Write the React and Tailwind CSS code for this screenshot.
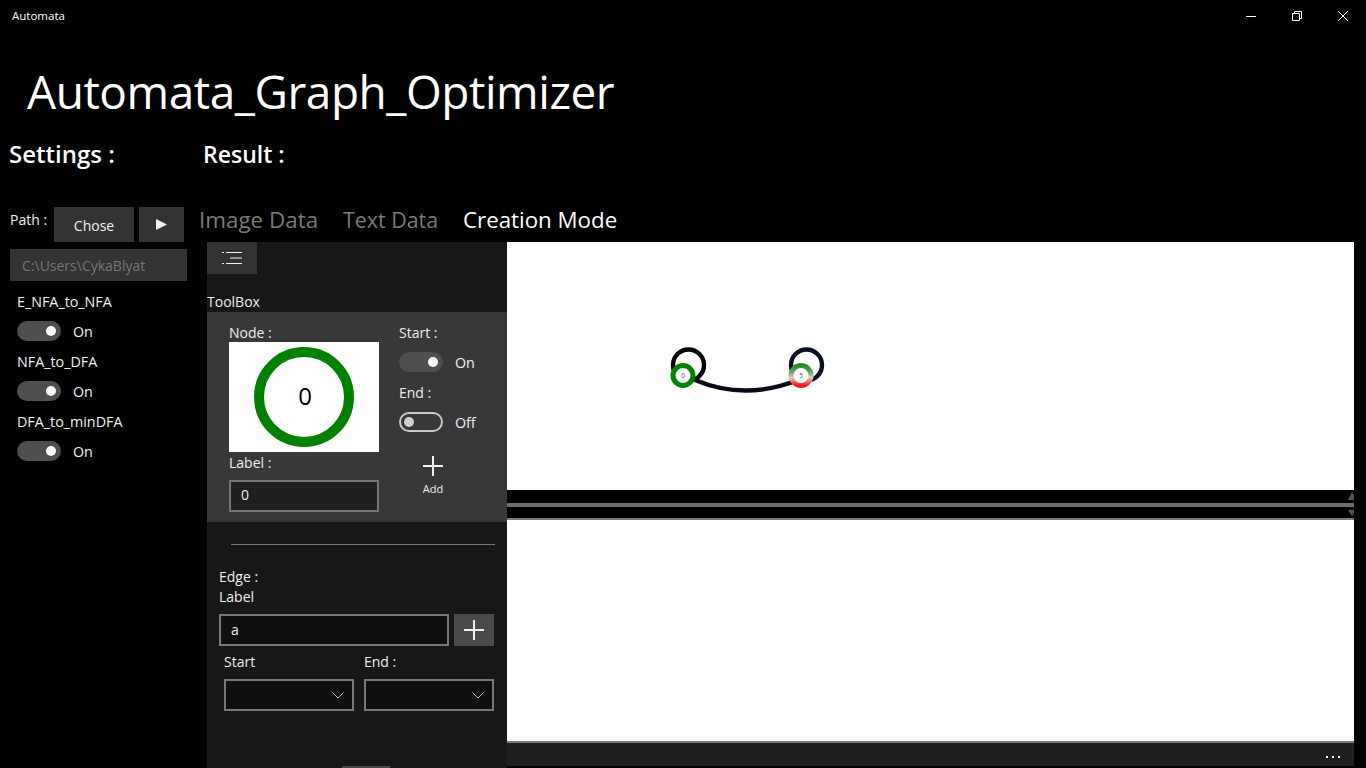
import React from "react";

const font = { fontFamily: '"Open Sans", "Noto Sans", sans-serif' };

function Toggle({ on, label }) {
  return (
    <div className="flex items-center h-5">
      {on ? (
        <div className="w-11 h-5 rounded-full flex items-center justify-end pr-[5px] bg-[#4f4f4f]">
          <div className="w-[10px] h-[10px] rounded-full bg-white" />
        </div>
      ) : (
        <div className="w-11 h-5 rounded-full border-2 border-[#c8c8c8] flex items-center pl-[3px]">
          <div className="w-[10px] h-[10px] rounded-full bg-[#d0d0d0]" />
        </div>
      )}
      <span className="ml-3 h-5 text-[14.3px] leading-[22px] text-[#f0f0f0]">{label}</span>
    </div>
  );
}

function Plus({ size }) {
  return (
    <svg width={size} height={size} viewBox="0 0 20 20" stroke="#f2f2f2" strokeWidth="2">
      <path d="M0 10H20M10 0V20" />
    </svg>
  );
}

function Chevron() {
  return (
    <svg width="12" height="7" viewBox="0 0 12 7" fill="none" stroke="#b5b5b5" strokeWidth="1">
      <path d="M0.5 0.5L6 6L11.5 0.5" />
    </svg>
  );
}

function Select() {
  return (
    <div className="w-[130px] h-8 border-2 border-[#777] bg-[#0f0f0f] flex items-center justify-end pr-[8px]">
      <Chevron />
    </div>
  );
}

function Graph() {
  return (
    <svg width="190" height="75" viewBox="0 0 190 75" className="ml-[143px] mt-[88px]">
      <defs>
        <linearGradient id="ring" x1="0" y1="0" x2="0" y2="1">
          <stop offset="0" stopColor="#2a8a2a" />
          <stop offset="0.35" stopColor="#6aa86a" />
          <stop offset="0.6" stopColor="#e0c8c8" />
          <stop offset="1" stopColor="#f01818" />
        </linearGradient>
      </defs>
      <circle cx="38.5" cy="35" r="15.5" fill="none" stroke="#000" strokeWidth="4.4" />
      <circle cx="156.5" cy="35" r="15.5" fill="none" stroke="#0a1020" strokeWidth="4.4" />
      <path d="M45 50Q95 71 148 50" fill="none" stroke="#050a18" strokeWidth="4.4" />
      <circle cx="33" cy="45.5" r="10" fill="#fff" stroke="#008000" strokeWidth="5" />
      <circle cx="151" cy="45.5" r="10" fill="#fff" stroke="url(#ring)" strokeWidth="5" />
      <text x="33" y="48" fontSize="6.5" textAnchor="middle" fill="#444">0</text>
      <text x="151" y="48" fontSize="6.5" textAnchor="middle" fill="#444">5</text>
    </svg>
  );
}

export default function App() {
  return (
    <div style={font} className="w-[1366px] h-[768px] bg-black text-white overflow-hidden flex flex-col relative">
      {/* title bar */}
      <div className="h-8 flex items-center shrink-0">
        <span className="ml-3 text-[11.5px] text-white">Automata</span>
        <div className="ml-auto flex items-center">
          <div className="w-[46px] flex justify-center">
            <svg width="10" height="10" viewBox="0 0 10 10" stroke="#fff"><path d="M0 5.5H10" /></svg>
          </div>
          <div className="w-[46px] flex justify-center">
            <svg width="10" height="10" viewBox="0 0 10 10" fill="none" stroke="#fff">
              <path d="M0.5 2.5H7.5V9.5H0.5ZM2.5 2.5V0.5H9.5V7.5H7.5" />
            </svg>
          </div>
          <div className="w-[46px] flex justify-center">
            <svg width="10" height="10" viewBox="0 0 10 10" stroke="#fff"><path d="M0 0L10 10M10 0L0 10" /></svg>
          </div>
        </div>
      </div>

      {/* app title */}
      <div className="h-[106px] shrink-0 pl-[27px] pt-[23px] text-[46px] tracking-[-0.46px] leading-[72px] font-normal text-white">
        Automata_Graph_Optimizer
      </div>

      <div className="flex flex-1 min-h-0">
        {/* settings column */}
        <div className="w-[199px] shrink-0">
          <div className="pl-[9px] h-[34px] text-[24px] leading-[32px] font-semibold">Settings :</div>
          <div className="h-[35px]" />
          <div className="flex h-[35px] pl-[10px]">
            <span className="w-[44px] text-[14px] leading-[26px] text-[#f0f0f0]">Path :</span>
            <div className="w-20 bg-[#333] flex items-center justify-center pt-[2px] text-[14px] text-[#f0f0f0]">Chose</div>
            <div className="w-[45px] ml-[5px] bg-[#333] flex items-center justify-center">
              <svg width="11" height="11" viewBox="0 0 11 11" fill="#f2f2f2"><path d="M0 0L11 5.5L0 11Z" /></svg>
            </div>
          </div>
          <div className="mt-[7px] ml-[10px] w-[177px] h-8 bg-[#333] pl-3 flex items-center text-[14px] text-[#777]">C:\Users\CykaBlyat</div>
          <div className="pl-[17px] pt-[10px] flex flex-col">
            <div className="h-5 text-[14.3px] leading-[22px] text-[#f0f0f0]">E_NFA_to_NFA</div>
            <div className="mt-[10px]"><Toggle on label="On" /></div>
            <div className="mt-[10px] h-5 text-[14.3px] leading-[22px] text-[#f0f0f0]">NFA_to_DFA</div>
            <div className="mt-[10px]"><Toggle on label="On" /></div>
            <div className="mt-[10px] h-5 text-[14.3px] leading-[22px] text-[#f0f0f0]">DFA_to_minDFA</div>
            <div className="mt-[10px]"><Toggle on label="On" /></div>
          </div>
        </div>

        {/* result column */}
        <div className="flex-1 min-w-0 flex flex-col">
          <div className="pl-1 h-[34px] text-[23px] leading-[32px] font-semibold">Result :</div>
          <div className="h-[30px]" />
          <div className="flex h-[40px] leading-[36px]">
            <span className="w-[144px] text-[22.4px] text-[#7a7a7a]">Image Data</span>
            <span className="w-[120px] text-[21.4px] text-[#7a7a7a]">Text Data</span>
            <span className="text-[22.3px] text-white">Creation Mode</span>
          </div>
          <div className="flex flex-1 min-h-0 ml-2 mr-3">
            {/* tool pane */}
            <div className="w-[300px] shrink-0 bg-[#171717] flex flex-col relative">
              <div className="w-[50px] h-8 bg-[#333] flex items-center justify-center">
                <svg width="20" height="14" viewBox="0 0 20 14" stroke="#f2f2f2" strokeWidth="1">
                  <path d="M0 1.5H2M4 1.5H20M8 7H20M0 12.5H2M4 12.5H20" />
                </svg>
              </div>
              <div className="h-[38px] pt-[18px] text-[14px] leading-[19px] text-[#f0f0f0]">ToolBox</div>
              <div className="h-[210px] bg-[#383838] flex pl-[22px]">
                <div className="w-[170px] flex flex-col">
                  <div className="pt-[11px] h-[30px] text-[14px] leading-[19px] text-[#eee]">Node :</div>
                  <div className="w-[150px] h-[110px] bg-white flex items-center justify-center">
                    <div className="w-[100px] h-[100px] rounded-full border-[10px] border-[#008000] flex items-center justify-center pl-[2px] pb-[2px] text-[24px] text-black">0</div>
                  </div>
                  <div className="h-7 pt-[1px] text-[14px] leading-[19px] text-[#eee]">Label :</div>
                  <div className="w-[150px] h-8 border-2 border-[#777] bg-[#1f1f1e] pl-[10px] pb-[3px] flex items-center text-[14px] text-[#eee]">0</div>
                </div>
                <div className="flex flex-col">
                  <div className="pt-[11px] h-[40px] text-[14px] leading-[19px] text-[#eee]">Start :</div>
                  <Toggle on label="On" />
                  <div className="h-[40px] pt-[11px] text-[14px] leading-[19px] text-[#eee]">End :</div>
                  <Toggle label="Off" />
                  <div className="w-[68px] mt-[24px] flex flex-col items-center">
                    <Plus size={20} />
                    <span className="mt-[6px] text-[11px] leading-[14px] text-[#eee]">Add</span>
                  </div>
                </div>
              </div>
              <div className="mt-[22px] ml-6 w-[264px] h-px bg-[#777]" />
              <div className="pl-3 pt-[22px] text-[14px] leading-5 text-[#eee]">Edge :</div>
              <div className="pl-3 text-[14px] leading-5 text-[#eee]">Label</div>
              <div className="flex pl-3 mt-[7px]">
                <div className="w-[230px] h-8 border-2 border-[#777] bg-[#0f0f0f] pl-[10px] pb-[2px] flex items-center text-[14px] text-[#eee]">a</div>
                <div className="w-10 h-8 ml-[5px] bg-[#4a4a4a] flex items-center justify-center"><Plus size={20} /></div>
              </div>
              <div className="flex pl-[17px] mt-[6px]">
                <div className="w-[140px]">
                  <div className="h-[27px] text-[14px] leading-5 text-[#eee]">Start</div>
                  <Select />
                </div>
                <div className="w-[130px]">
                  <div className="h-[27px] text-[14px] leading-5 text-[#eee]">End :</div>
                  <Select />
                </div>
              </div>
              <div className="absolute left-[135px] bottom-0 w-12 h-0.5 bg-[#4a4a4a]" />
            </div>

            {/* canvas */}
            <div className="flex-1 min-w-0 flex flex-col">
              <div className="h-[248px] bg-white shrink-0 overflow-hidden"><Graph /></div>
              <div className="h-7 shrink-0 pt-[13px] relative overflow-hidden">
                <div className="w-full h-1 bg-[#6e6e6e]" />
                <div className="absolute -right-[2px] top-[2px] w-0 h-0 border-l-[4px] border-r-[4px] border-b-[8px] border-l-transparent border-r-transparent border-b-[#555]" />
                <div className="absolute -right-[2px] bottom-[2px] w-0 h-0 border-l-[4px] border-r-[4px] border-t-[6px] border-l-transparent border-r-transparent border-t-[#555]" />
              </div>
              <div className="flex-1 bg-white border-y-2 border-[#7a7a7a]" />
              <div className="h-[23px] bg-[#1f1f1f] shrink-0 flex items-center justify-end pt-[5px] pr-[14px] gap-[4px]">
                <div className="w-[2px] h-[2px] bg-white" />
                <div className="w-[2px] h-[2px] bg-white" />
                <div className="w-[2px] h-[2px] bg-white" />
              </div>
              <div className="h-[2px] shrink-0 bg-black" />
            </div>
          </div>
        </div>
      </div>
    </div>
  );
}
